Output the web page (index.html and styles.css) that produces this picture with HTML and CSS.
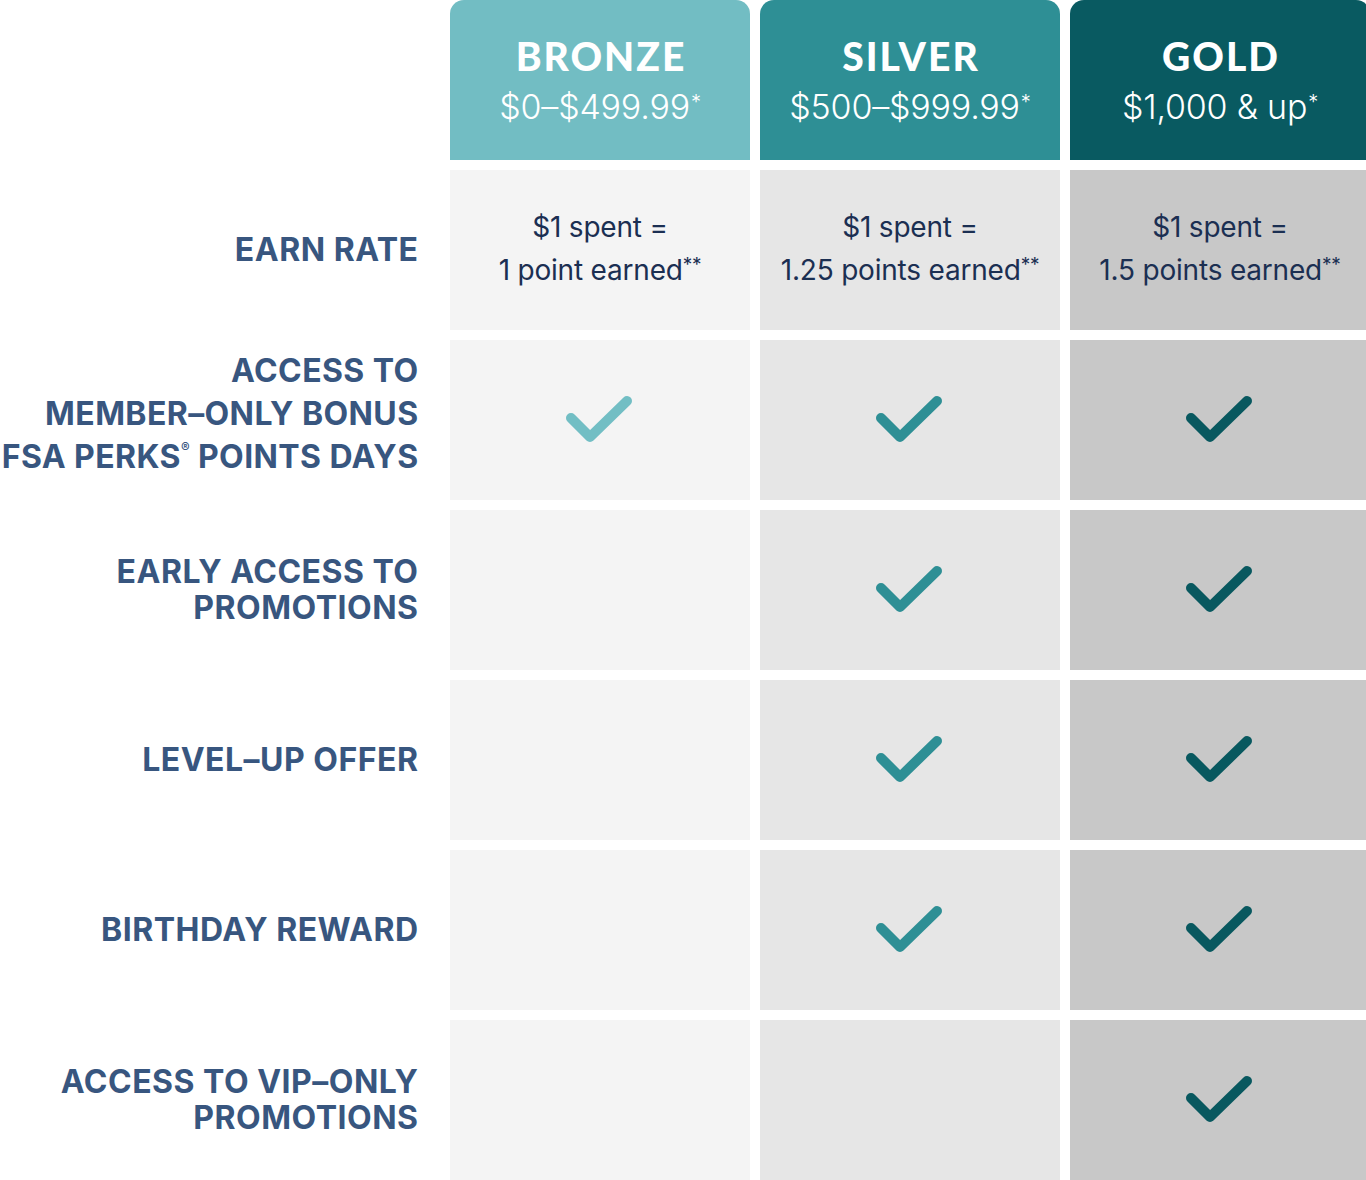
FILE: index.html
```html
<!DOCTYPE html>
<html lang="en">
<head>
<meta charset="utf-8">
<title>FSA Perks Tiers</title>
<link rel="stylesheet" href="styles.css">
</head>
<body>
<div class="frame">
  <div class="tiers">
    <div class="corner"></div>
    <div class="head bronze"><div class="tier-name">BRONZE</div><div class="tier-range">$0–$499.99<sup>*</sup></div></div>
    <div class="head silver"><div class="tier-name">SILVER</div><div class="tier-range">$500–$999.99<sup>*</sup></div></div>
    <div class="head gold"><div class="tier-name">GOLD</div><div class="tier-range">$1,000 &amp; up<sup>*</sup></div></div>

    <div class="label"><span>EARN RATE</span></div>
    <div class="cell c1"><p class="rate">$1 spent =<br>1 point earned<sup>**</sup></p></div>
    <div class="cell c2"><p class="rate">$1 spent =<br>1.25 points earned<sup>**</sup></p></div>
    <div class="cell c3"><p class="rate">$1 spent =<br>1.5 points earned<sup>**</sup></p></div>

    <div class="label tall"><span>ACCESS TO<br>MEMBER–ONLY BONUS<br>FSA PERKS<sup class="reg">®</sup> POINTS DAYS</span></div>
    <div class="cell c1"><svg class="check k1" viewBox="0 0 70 50"><path d="M6 23 L25 42 L62 6"/></svg></div>
    <div class="cell c2"><svg class="check k2" viewBox="0 0 70 50"><path d="M6 23 L25 42 L62 6"/></svg></div>
    <div class="cell c3"><svg class="check k3" viewBox="0 0 70 50"><path d="M6 23 L25 42 L62 6"/></svg></div>

    <div class="label"><span>EARLY ACCESS TO<br>PROMOTIONS</span></div>
    <div class="cell c1"></div>
    <div class="cell c2"><svg class="check k2" viewBox="0 0 70 50"><path d="M6 23 L25 42 L62 6"/></svg></div>
    <div class="cell c3"><svg class="check k3" viewBox="0 0 70 50"><path d="M6 23 L25 42 L62 6"/></svg></div>

    <div class="label"><span>LEVEL–UP OFFER</span></div>
    <div class="cell c1"></div>
    <div class="cell c2"><svg class="check k2" viewBox="0 0 70 50"><path d="M6 23 L25 42 L62 6"/></svg></div>
    <div class="cell c3"><svg class="check k3" viewBox="0 0 70 50"><path d="M6 23 L25 42 L62 6"/></svg></div>

    <div class="label"><span>BIRTHDAY REWARD</span></div>
    <div class="cell c1"></div>
    <div class="cell c2"><svg class="check k2" viewBox="0 0 70 50"><path d="M6 23 L25 42 L62 6"/></svg></div>
    <div class="cell c3"><svg class="check k3" viewBox="0 0 70 50"><path d="M6 23 L25 42 L62 6"/></svg></div>

    <div class="label"><span>ACCESS TO VIP–ONLY<br>PROMOTIONS</span></div>
    <div class="cell c1"></div>
    <div class="cell c2"></div>
    <div class="cell c3"><svg class="check k3" viewBox="0 0 70 50"><path d="M6 23 L25 42 L62 6"/></svg></div>
  </div>
</div>
</body>
</html>
```
FILE: styles.css
```css
html, body {
  margin: 0;
  padding: 0;
  background: #ffffff;
  overflow: hidden;
}

.frame {
  width: 1366px;
  height: 1180px;
  overflow: hidden;
}

.tiers {
  display: grid;
  grid-template-columns: 440px 300px 300px 300px;
  grid-template-rows: 160px repeat(6, 160px);
  gap: 10px;
  width: 1370px;
  font-family: "Inter", sans-serif;
}

.head {
  border-radius: 14px 14px 0 0;
  color: #ffffff;
  display: flex;
  flex-direction: column;
  align-items: center;
  padding-top: 33px;
  box-sizing: border-box;
}

.bronze { background: #72bdc3; }
.silver { background: #2e8f95; }
.gold { background: #095a61; }

.tier-name {
  font-family: "Lato", sans-serif;
  font-weight: 900;
  font-size: 39px;
  line-height: 46px;
  letter-spacing: 2px;
  margin-right: -2px;
}

.tier-range {
  font-family: "Inter", sans-serif;
  font-weight: 300;
  font-size: 34px;
  line-height: 46px;
  margin-top: 5px;
  letter-spacing: -0.2px;
}

.tier-range sup {
  font-size: 20px;
  vertical-align: 10px;
  line-height: 0;
  margin-left: 1px;
}

.label {
  display: flex;
  align-items: center;
  justify-content: flex-end;
  text-align: right;
  white-space: nowrap;
  padding-right: 22px;
  font-family: "Inter", sans-serif;
  font-weight: 700;
  font-size: 32px;
  line-height: 36px;
  letter-spacing: 0.5px;
  color: #38567f;
  min-width: 0;
}

.label span {
  margin-right: -0.5px;
  flex-shrink: 0;
}

.label.tall {
  line-height: 43px;
  padding-bottom: 14px;
  box-sizing: border-box;
  letter-spacing: 0.4px;
}

.reg {
  font-size: 13px;
  vertical-align: 16px;
  line-height: 0;
}

.cell {
  display: flex;
  align-items: center;
  justify-content: center;
}

.c1 { background: #f4f4f4; }
.c2 { background: #e6e6e6; }
.c3 { background: #c8c8c8; }

.rate {
  margin: 0 0 2px 0;
  text-align: center;
  font-family: "Inter", sans-serif;
  font-weight: 400;
  font-size: 28px;
  line-height: 43px;
  color: #1b2f52;
  letter-spacing: -0.2px;
}

.rate sup {
  font-size: 19px;
  vertical-align: 9px;
  line-height: 0;
}

.check {
  width: 70px;
  height: 50px;
}

.check path {
  fill: none;
  stroke-width: 10;
  stroke-linecap: round;
  stroke-linejoin: round;
}

.k1 path { stroke: #72bec4; }
.k2 path { stroke: #2e8f95; }
.k3 path { stroke: #08585f; }
```
